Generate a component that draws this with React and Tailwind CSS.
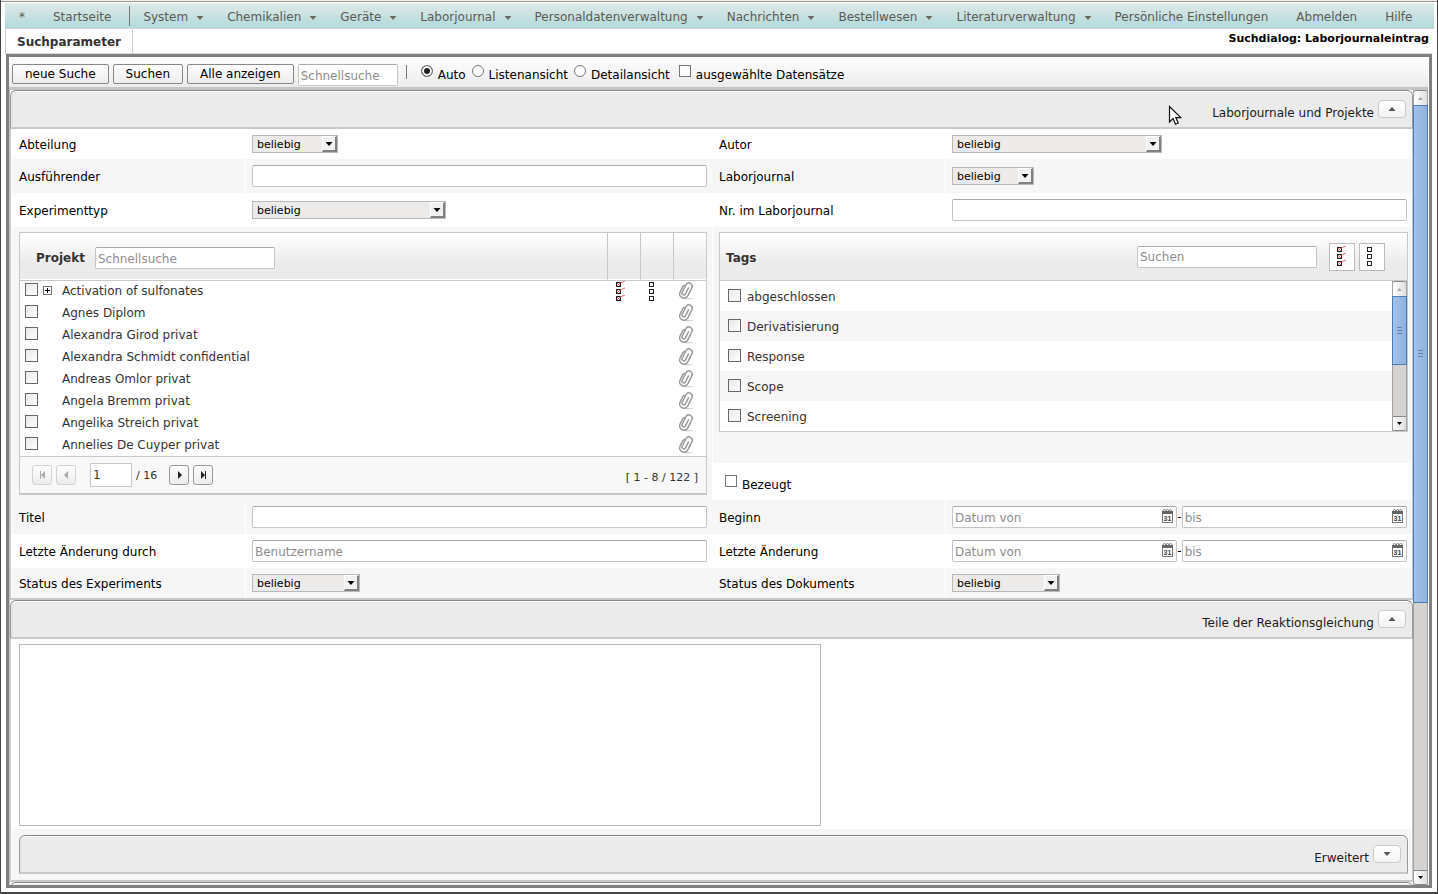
import { useState } from 'react';

const menuItems = [
  { label: '*' },
  { label: 'Startseite', divider: true },
  { label: 'System', sub: true },
  { label: 'Chemikalien', sub: true },
  { label: 'Geräte', sub: true },
  { label: 'Laborjournal', sub: true },
  { label: 'Personaldatenverwaltung', sub: true },
  { label: 'Nachrichten', sub: true },
  { label: 'Bestellwesen', sub: true },
  { label: 'Literaturverwaltung', sub: true },
  { label: 'Persönliche Einstellungen' },
  { label: 'Abmelden' },
  { label: 'Hilfe' },
];

const projects = [
  'Activation of sulfonates',
  'Agnes Diplom',
  'Alexandra Girod privat',
  'Alexandra Schmidt confidential',
  'Andreas Omlor privat',
  'Angela Bremm privat',
  'Angelika Streich privat',
  'Annelies De Cuyper privat',
];

const tags = ['abgeschlossen', 'Derivatisierung', 'Response', 'Scope', 'Screening'];

const inputClass =
  'h-[22px] min-w-0 rounded-xs border border-[#c4c4c4] border-t-[#aaaaaa] bg-white px-[2px] pt-px text-[12px] text-[#333] placeholder:text-[#8e8e8e] outline-none';

const boxClass =
  'block size-[13px] shrink-0 appearance-none border border-[#666] bg-linear-to-br from-[#e8e8e8] to-white checked:bg-none checked:bg-[#555]';

const headGradient = 'bg-linear-to-b from-white from-5% via-[#ebebeb] via-65% to-[#ebebeb]';

/* ---------- icons ---------- */

const Triangle = ({ dir = 'down', color = '#555' }) => (
  <svg width="8" height="4" viewBox="0 0 8 4" className="block" fill={color} aria-hidden="true">
    {dir === 'down' ? <path d="M0.5 0h7L4 4z" /> : <path d="M0.5 4h7L4 0z" />}
  </svg>
);

const CheckList = ({ checked }) => (
  <svg width="10" height="20" viewBox="0 0 10 20" className="block" aria-hidden="true">
    {[1, 8, 15].map((y) => (
      <g key={y} fill="none">
        <rect x="0.5" y={y + 0.5} width="4" height="4" stroke="#222" />
        {checked && <path d={`M1 ${y + 1}l3 3M1 ${y + 4}l3 -3l5 -2`} stroke="#e86060" strokeWidth="0.9" />}
      </g>
    ))}
  </svg>
);

const ClipIcon = () => (
  <svg width="18" height="20" viewBox="0 0 18 20" className="block" fill="none" aria-hidden="true">
    <ellipse cx="11" cy="17.6" rx="5.5" ry="0.7" fill="#d0d0d0" />
    <g transform="rotate(27 9 9.5)" stroke="#9a9a98" strokeWidth="1.5" strokeLinecap="round">
      <path d="M13 9V4.4a3.3 3.3 0 0 0 -6.6 0v8.4a1.8 1.8 0 0 0 3.6 0V6" />
      <path d="M13 9v4.4a4.3 4.3 0 0 1 -8.6 0V7.5a2 2 0 0 1 1.6 -2" />
    </g>
  </svg>
);

const CalendarIcon = () => (
  <svg width="11" height="14" viewBox="0 0 11 14" className="block" aria-hidden="true">
    <rect x="0.5" y="3.5" width="10" height="10" fill="#fff" stroke="#777" />
    <rect x="0" y="2" width="11" height="3" fill="#666" />
    <path d="M1 2l1.5-2l1.5 2l1.5-2l1.5 2l1.5-2l1.5 2" fill="none" stroke="#777" strokeWidth="0.9" />
    <text x="5.5" y="12" fontSize="7" fontWeight="bold" textAnchor="middle" fill="#444" fontFamily="Liberation Sans, sans-serif">31</text>
  </svg>
);

const Cursor = () => (
  <svg width="14" height="21" viewBox="0 0 14 21" className="pointer-events-none absolute top-[105px] left-[1167px]" aria-hidden="true">
    <path d="M1.5 1.5v15.5l3.6-3.4l2.4 5.6l2.7-1.2l-2.4-5.4h4.9z" fill="#fff" stroke="#111" strokeWidth="1.2" />
  </svg>
);

const pagerShapes = {
  first: 'M1 0h1v8h-1zM6 0v8L2 4z',
  prev: 'M5 0v8L1 4z',
  next: 'M2 0v8L6 4z',
  last: 'M1 0v8L5 4zM5 0h1v8h-1z',
};

/* ---------- controls ---------- */

const PagerButton = ({ shape, label, disabled }) => (
  <button
    type="button"
    aria-label={label}
    disabled={disabled}
    className="flex size-5 items-center justify-center rounded-[3px] border border-[#999] bg-linear-to-b from-white to-[#ececec] text-[#222] disabled:border-[#d2d2d2] disabled:text-[#aaa]"
  >
    <svg width="7" height="8" viewBox="0 0 7 8" fill="currentColor" aria-hidden="true">
      <path d={pagerShapes[shape]} />
    </svg>
  </button>
);

const Select = ({ id, width }) => (
  <span className={`relative block ${width}`}>
    <select
      id={id}
      className="block h-[18px] w-full appearance-none border border-[#b9b9b9] bg-[#ecebea] pt-px pl-1 text-[11px] leading-4 text-black outline-none"
    >
      <option>beliebig</option>
    </select>
    <span className="pointer-events-none absolute top-px right-px flex h-4 w-[15px] items-center justify-center border-t border-r-2 border-b-2 border-l border-t-white border-r-[#808080] border-b-[#808080] border-l-white bg-[#f2f1f0]">
      <Triangle color="#000" />
    </span>
  </span>
);

const DateField = ({ id, placeholder, label }) => (
  <span className="relative block min-w-0 flex-1">
    <input id={id} type="text" aria-label={label} placeholder={placeholder} className={`${inputClass} block w-full`} />
    <button type="button" aria-label="Kalender" className="absolute top-[3px] right-1">
      <CalendarIcon />
    </button>
  </span>
);

const Scrollbar = ({ thumb, rest }) => (
  <div className="flex w-[15px] shrink-0 flex-col border-x border-[#a3a19f] bg-[#d4d3d1]" aria-hidden="true">
    <div className="flex h-[15px] shrink-0 items-center justify-center rounded-t-xs border-t border-[#888] bg-linear-to-r from-white to-[#e0dfdd]">
      <svg width="5" height="3" viewBox="0 0 5 3" fill="#aaa"><path d="M0 3h5L2.5 0z" /></svg>
    </div>
    <div className={`-mx-px flex ${thumb} basis-0 flex-col items-center justify-center gap-[2px] border border-[#4d7db8] bg-linear-to-r from-[#a4c2ea] to-[#8eb1de]`}>
      <span className="h-px w-[5px] bg-[#6580a8]" />
      <span className="h-px w-[5px] bg-[#6580a8]" />
      <span className="h-px w-[5px] bg-[#6580a8]" />
    </div>
    <div className={`${rest} basis-0`} />
    <div className="flex h-[15px] shrink-0 items-center justify-center rounded-b-xs border-y border-[#888] bg-linear-to-r from-white to-[#e0dfdd]">
      <svg width="5" height="3" viewBox="0 0 5 3" fill="#000"><path d="M0 0h5L2.5 3z" /></svg>
    </div>
  </div>
);

const SectionHead = ({ title, dir }) => (
  <div className="flex h-[39px] shrink-0 items-start justify-end gap-1 rounded-t-md border border-b-2 border-t-[#888] border-r-[#999] border-b-[#c8c8c8] border-l-[#999] bg-[#ebebeb] pt-2 pr-1.5 shadow-[inset_0_1px_0_#fff,inset_2px_0_0_#e4e4e4]">
    <h2 className="pt-1.5 text-[12px] leading-4 text-[#1a1a1a]">{title}</h2>
    <button
      type="button"
      aria-label={title}
      className="mt-px flex h-[18px] w-7 items-center justify-center rounded-sm border border-[#c9c9c9] bg-linear-to-b from-white to-[#f3f3f3]"
    >
      <Triangle dir={dir} />
    </button>
  </div>
);

const Cell = ({ id, label, children }) => (
  <div className="flex min-w-0 items-stretch">
    <label htmlFor={id} className="flex w-[234px] shrink-0 items-center border-r border-white pt-px pl-[7px]">
      {label}
    </label>
    <div className="flex min-w-0 flex-1 items-center pr-[5px] pl-1.5">{children}</div>
  </div>
);

const FormRow = ({ height, shaded, children }) => (
  <div className={`grid grid-cols-2 ${height} ${shaded ? 'bg-[#f6f6f6]' : 'bg-white'}`}>{children}</div>
);

/* ---------- panels ---------- */

const ProjectTable = () => (
  <div className="border border-b-2 border-[#c8c8c8] bg-white text-[#333]">
    <table className="w-full table-fixed border-collapse">
      <colgroup>
        <col />
        <col className="w-[33px]" />
        <col className="w-[33px]" />
        <col className="w-[33px]" />
      </colgroup>
      <thead>
        <tr className={`h-[47px] border-b border-[#c8c8c8] ${headGradient}`}>
          <th className="p-0 text-left">
            <label className="flex items-center gap-2.5 pt-1 pl-4">
              Projekt
              <input type="text" placeholder="Schnellsuche" className={`${inputClass} w-[180px] font-normal`} />
            </label>
          </th>
          <th className="border-l border-[#c8c8c8]" />
          <th className="border-l border-[#c8c8c8]" />
          <th className="border-l border-[#c8c8c8]" />
        </tr>
      </thead>
      <tbody>
        {projects.map((name, i) => (
          <tr key={name} className="h-[22px]">
            <td className="p-0">
              <label className="flex items-start pl-[5px]">
                <input type="checkbox" className={boxClass} />
                <span className="flex h-3.5 w-6 items-center pl-[5px]">
                  {i === 0 && (
                    <svg width="9" height="9" viewBox="0 0 9 9" aria-hidden="true">
                      <rect x="0.5" y="0.5" width="8" height="8" fill="#fff" stroke="#777" />
                      <path d="M2 4.5h5M4.5 2v5" stroke="#000" />
                    </svg>
                  )}
                </span>
                {name}
              </label>
            </td>
            <td className="p-0 pl-[9px]">{i === 0 && <CheckList checked />}</td>
            <td className="p-0 pl-[9px]">{i === 0 && <CheckList />}</td>
            <td className="p-0 pl-1">
              <ClipIcon />
            </td>
          </tr>
        ))}
      </tbody>
    </table>
    <div className="flex h-[37px] items-center border-t border-[#c8c8c8] bg-[#f8f8f8] px-2 pl-3 text-[11px]">
      <div className="flex gap-1">
        <PagerButton shape="first" label="Erste Seite" disabled />
        <PagerButton shape="prev" label="Vorherige Seite" disabled />
      </div>
      <input
        type="text"
        aria-label="Seite"
        defaultValue="1"
        className="ml-3.5 h-6 w-[42px] border border-[#c8c8c8] bg-white px-[2px] text-[12px]"
      />
      <span className="ml-1 pt-[2px]">/ 16</span>
      <div className="ml-3 flex gap-1">
        <PagerButton shape="next" label="Nächste Seite" />
        <PagerButton shape="last" label="Letzte Seite" />
      </div>
      <span className="ml-auto pt-1.5">[ 1 - 8 / 122 ]</span>
    </div>
  </div>
);

const TagList = () => (
  <div className="border border-[#c8c8c8] bg-white text-[#333]">
    <div className={`flex h-12 items-center border-b border-[#c8c8c8] pr-[22px] pl-1.5 ${headGradient}`}>
      <label htmlFor="tagsuche" className="pt-[2px] font-bold">Tags</label>
      <input id="tagsuche" type="text" placeholder="Suchen" className={`${inputClass} mr-3 ml-auto w-[180px]`} />
      <button type="button" aria-label="Alle auswählen" className="mr-1 h-7 w-[26px] border border-[#bbb] bg-white pb-0.5 pl-[7px]">
        <CheckList checked />
      </button>
      <button type="button" aria-label="Auswahl aufheben" className="h-7 w-[26px] border border-[#bbb] bg-white pb-0.5 pl-[7px]">
        <CheckList />
      </button>
    </div>
    <div className="flex">
      <ul className="flex-1">
        {tags.map((tag) => (
          <li key={tag} className="even:bg-[#f6f6f6]">
            <label className="flex h-[30px] items-start gap-1.5 pt-2 pl-2">
              <input type="checkbox" className={boxClass} />
              {tag}
            </label>
          </li>
        ))}
      </ul>
      <Scrollbar thumb="grow-[57]" rest="grow-[43]" />
    </div>
  </div>
);

const views = ['Auto', 'Listenansicht', 'Detailansicht'];

const Toolbar = () => {
  const [view, setView] = useState('Auto');
  const buttonClass =
    'h-5 rounded-xs border border-[#888] bg-linear-to-b from-white to-[#ececec] px-3 text-[12px] leading-4 text-black';

  return (
    <div className="flex h-[33px] shrink-0 items-center border-b-3 border-[#c4c4c4] bg-linear-to-b from-white to-[#ebebeb] pl-[3px]">
      <div className="flex gap-1 pt-1.5">
        <button type="button" className={buttonClass}>neue Suche</button>
        <button type="button" className={buttonClass}>Suchen</button>
        <button type="button" className={buttonClass}>Alle anzeigen</button>
        <input type="text" aria-label="Schnellsuche" placeholder="Schnellsuche" className={`${inputClass} h-5 w-[100px]`} />
      </div>
      <span className="mr-3.5 ml-2 h-3.5 w-px bg-[#777]" />
      <div className="flex gap-1.5 pt-1">
        {views.map((name) => (
          <label key={name} className="flex items-start gap-[5px]">
            <input
              type="radio"
              name="ansicht"
              checked={view === name}
              onChange={() => setView(name)}
              className="block size-3 shrink-0 appearance-none rounded-full border border-[#777] bg-white checked:bg-[#222] checked:shadow-[inset_0_0_0_2px_#fff]"
            />
            <span className="pt-[2px] leading-4">{name}</span>
          </label>
        ))}
        <label className="ml-[3px] flex items-start gap-[5px]">
          <input type="checkbox" className="block size-3 shrink-0 appearance-none border border-[#777] bg-white checked:bg-[#555]" />
          <span className="pt-[2px] leading-4">ausgewählte Datensätze</span>
        </label>
      </div>
    </div>
  );
};

const MenuBar = () => (
  <nav className="mr-[3px] ml-1 flex h-[26px] shrink-0 items-center border-b border-[#d4d4d4] bg-linear-to-b from-[#dfe9e8] to-[#b1dada] pl-3.5 text-[#5c5a55]">
    {menuItems.map((item) => (
      <a
        key={item.label}
        href="#"
        className={`flex h-5 items-center whitespace-nowrap pt-[3px] ${
          item.divider ? 'mr-[13px] border-r border-[#777] pr-[18px]' : item.sub ? 'mr-[23px]' : 'mr-7'
        }`}
      >
        {item.label}
        {item.sub && (
          <span className="ml-2 pt-[2px]">
            <Triangle color="#6b6a60" />
          </span>
        )}
      </a>
    ))}
  </nav>
);

const App = () => (
  <div className="relative flex h-screen flex-col overflow-hidden border-x border-b-2 border-[#444] bg-white font-['DejaVu_Sans',sans-serif] text-[12px] leading-4 text-black">
    <div className="mb-px h-[2px] shrink-0 border-b border-[#9d9892] bg-[#f0efee]" />
    <MenuBar />
    <div className="mr-1 ml-1 flex h-[25px] shrink-0 items-start justify-between border-b border-[#d8d8d8]">
      <a href="#" className="flex h-6 items-center rounded-t-xs border-x border-[#ccc] px-[11px] pt-px font-bold text-[#333]">
        Suchparameter
      </a>
      <h1 className="pt-[2px] pr-1 text-[11px] font-bold">Suchdialog: Laborjournaleintrag</h1>
    </div>
    <main className="mr-[5px] mb-1 ml-[5px] flex min-h-0 flex-1 flex-col border-3 border-[#808080] pr-px">
      <Toolbar />
      <div className="flex min-h-0 flex-1">
        <div className="flex min-w-0 flex-1 flex-col overflow-hidden border-l border-[#c4c4c4]">
          <SectionHead title="Laborjournale und Projekte" dir="up" />
          <div className="shrink-0 border-x border-b-2 border-[#c8c8c8] pl-px">
            <FormRow height="h-[30px]">
              <Cell id="abteilung" label="Abteilung"><Select id="abteilung" width="w-[86px]" /></Cell>
              <Cell id="autor" label="Autor"><Select id="autor" width="w-[210px]" /></Cell>
            </FormRow>
            <FormRow height="h-[34px]" shaded>
              <Cell id="ausfuehrender" label="Ausführender"><input id="ausfuehrender" type="text" className={`${inputClass} w-full`} /></Cell>
              <Cell id="journal" label="Laborjournal"><Select id="journal" width="w-[82px]" /></Cell>
            </FormRow>
            <FormRow height="h-[34px]">
              <Cell id="typ" label="Experimenttyp"><Select id="typ" width="w-[194px]" /></Cell>
              <Cell id="nummer" label="Nr. im Laborjournal"><input id="nummer" type="text" className={`${inputClass} w-full`} /></Cell>
            </FormRow>
            <div className="grid grid-cols-2">
              <div className="bg-[#f6f6f6] pt-[5px] pr-[5px] pb-[5px] pl-[7px]">
                <ProjectTable />
              </div>
              <div className="flex flex-col border-l border-white">
                <div className="flex-1 bg-[#f6f6f6] pt-[5px] pr-1 pl-1.5">
                  <TagList />
                </div>
                <label className="flex h-[37px] items-start gap-[5px] bg-white pt-3 pl-3">
                  <input type="checkbox" className="block size-3 appearance-none border border-[#777] bg-white checked:bg-[#555]" />
                  <span className="pt-[2px]">Bezeugt</span>
                </label>
              </div>
            </div>
            <FormRow height="h-[34px]" shaded>
              <Cell id="titel" label="Titel"><input id="titel" type="text" className={`${inputClass} w-full`} /></Cell>
              <Cell id="beginn" label="Beginn">
                <DateField id="beginn" placeholder="Datum von" />
                <span>-</span>
                <DateField placeholder="bis" label="Beginn bis" />
              </Cell>
            </FormRow>
            <FormRow height="h-[34px]">
              <Cell id="geaendert" label="Letzte Änderung durch">
                <input id="geaendert" type="text" placeholder="Benutzername" className={`${inputClass} w-full`} />
              </Cell>
              <Cell id="aenderung" label="Letzte Änderung">
                <DateField id="aenderung" placeholder="Datum von" />
                <span>-</span>
                <DateField placeholder="bis" label="Letzte Änderung bis" />
              </Cell>
            </FormRow>
            <FormRow height="h-[30px]" shaded>
              <Cell id="statusexp" label="Status des Experiments"><Select id="statusexp" width="w-[108px]" /></Cell>
              <Cell id="statusdok" label="Status des Dokuments"><Select id="statusdok" width="w-[108px]" /></Cell>
            </FormRow>
          </div>
          <SectionHead title="Teile der Reaktionsgleichung" dir="up" />
          <div className="shrink-0 border-x border-b-2 border-[#c8c8c8] pl-px">
            <div className="px-[7px] pt-[5px] pb-[3px]">
              <textarea aria-label="Teile der Reaktionsgleichung" className="block h-[182px] w-[802px] resize-none border border-[#bbb] bg-white outline-none" />
            </div>
            <div className="bg-[#f6f6f6] pt-1.5 pr-1 pb-1.5 pl-[7px]">
              <SectionHead title="Erweitert" dir="down" />
            </div>
          </div>
          <SectionHead title="" dir="down" />
        </div>
        <Scrollbar thumb="grow-[65]" rest="grow-[35]" />
      </div>
    </main>
    <Cursor />
  </div>
);

export default App;
